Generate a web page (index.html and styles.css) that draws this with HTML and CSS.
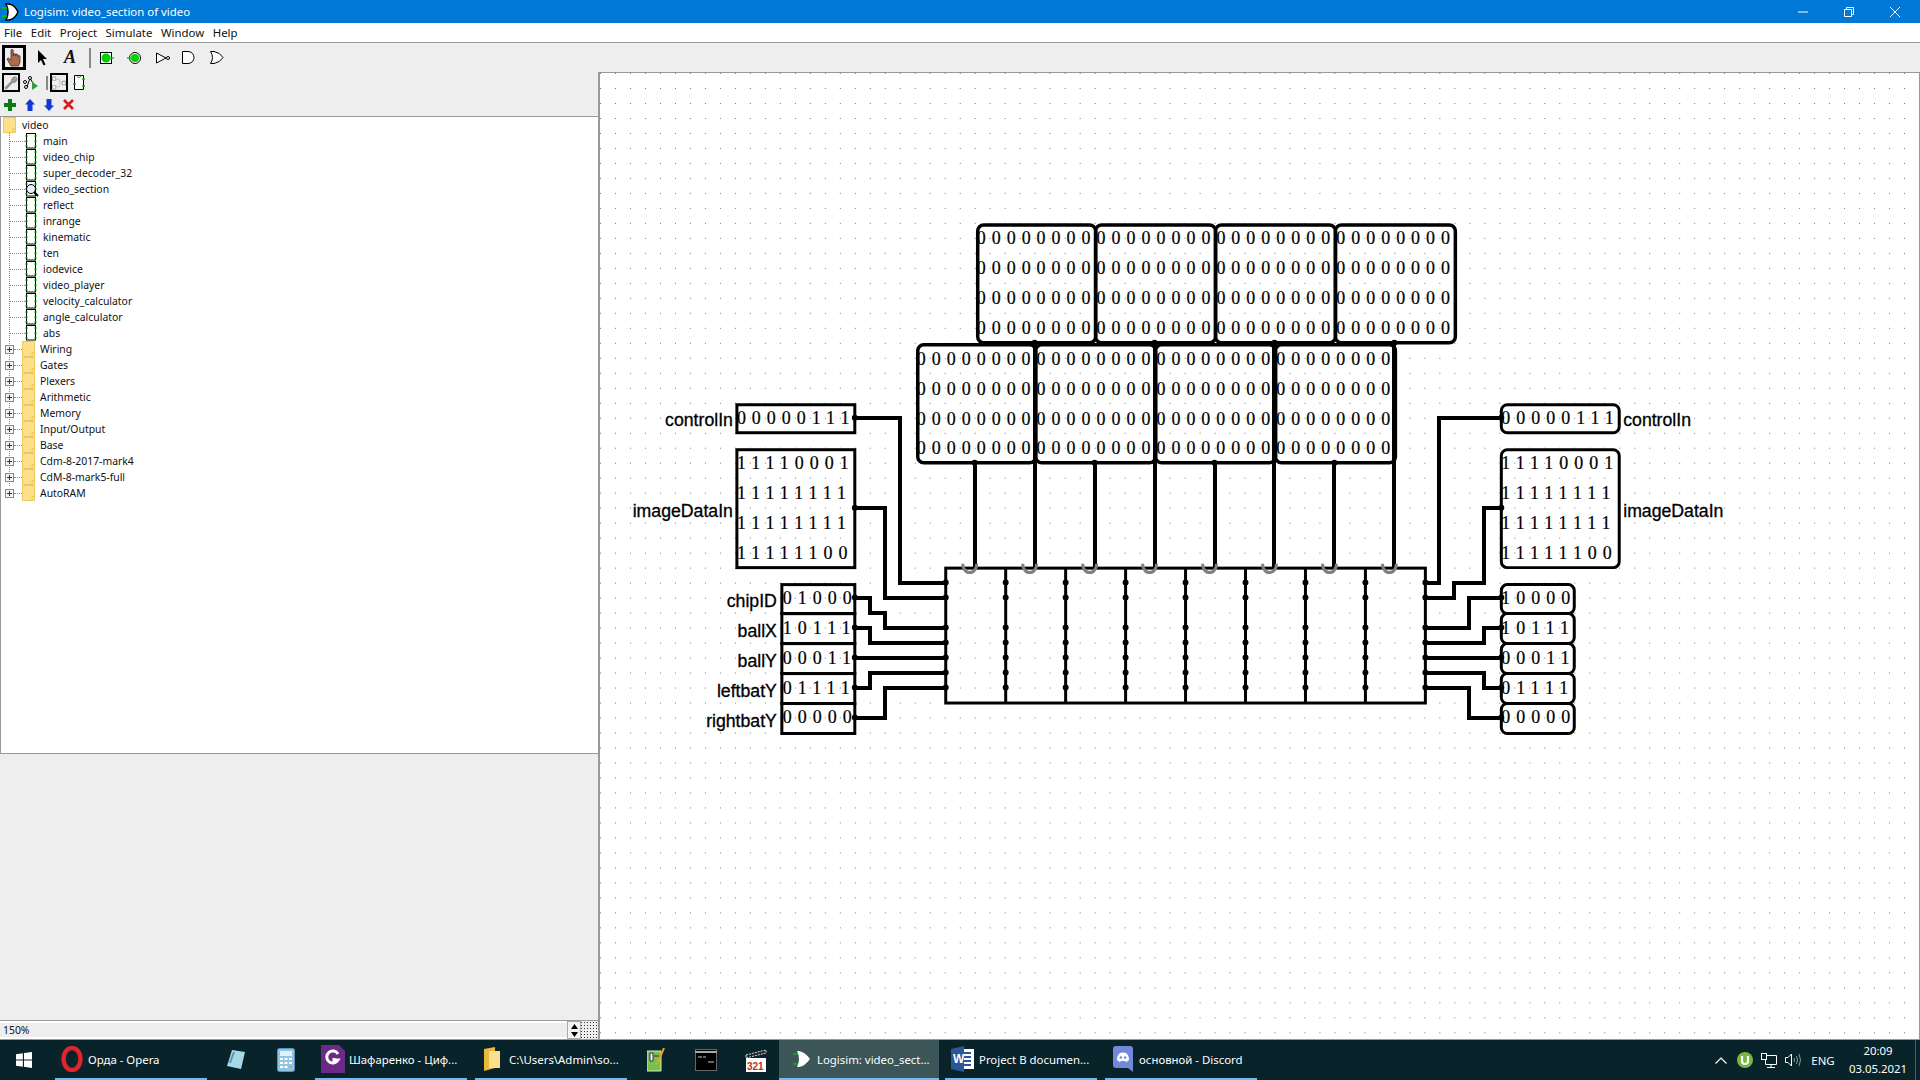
FILE: index.html
```html
<!DOCTYPE html>
<html lang="en">
<head>
  <meta charset="UTF-8">
  <title>Logisim: video_section of video</title>
  <link rel="stylesheet" href="styles.css">
</head>
<body>
  <!-- shared icons -->
  <svg class="defs" width="0" height="0">
    <symbol id="chip" viewBox="0 0 12 16">
      <rect x="1.5" y="0.5" width="9" height="14.5" fill="#fff" stroke="#000"/>
      <path d="M0 3h3M0 8h3M0 13h3M9 3h3M9 8h3M9 13h3" stroke="#00d000" stroke-width="1.2"/>
    </symbol>
    <symbol id="folder" viewBox="0 0 13 16">
      <path d="M.5.5H12.5V15.5H.5z" fill="#fde08a" stroke="#ecc95a"/>
      <path d="M10 15V11.5H12.5" fill="none" stroke="#ecc95a"/>
    </symbol>
    <symbol id="plus" viewBox="0 0 9 9">
      <rect x=".5" y=".5" width="8" height="8" fill="#f4f4f4" stroke="#8a8a8a"/>
      <path d="M2 4.5h5M4.5 2v5" stroke="#333"/>
    </symbol>
  </svg>

  <div class="window">
    <header class="titlebar">
      <svg class="app-icon" width="20" height="20" viewBox="0 0 20 20">
        <path d="M5 2h3q6 1 9 8q-3 7-9 8H5q4-8 0-16z" fill="#fff" stroke="#000" stroke-width="1.5"/>
        <path d="M1 6h5M1 14h5" stroke="#00c000" stroke-width="2"/>
      </svg>
      <span class="title-text">Logisim: video_section of video</span>
      <div class="win-btns">
        <button class="win-btn"><svg width="12" height="12"><path d="M1 6h10" stroke="#fff"/></svg></button>
        <button class="win-btn"><svg width="12" height="12"><path d="M1.5 3.5h7v7h-7zM3.5 3V1.5h7v7H9" fill="none" stroke="#fff"/></svg></button>
        <button class="win-btn"><svg width="12" height="12"><path d="M1 1l10 10M11 1L1 11" stroke="#fff"/></svg></button>
      </div>
    </header>

    <nav class="menubar">
      <span>File</span><span>Edit</span><span>Project</span><span>Simulate</span><span>Window</span><span>Help</span>
    </nav>

    <div class="main">
      <aside class="left">
        <div class="tools">
          <div class="tool-row row-a">
            <span class="frame frame-big">
              <svg width="18" height="18" viewBox="0 0 18 18"><path d="M6 17L2 10l1.5-1 2.5 2V1.5a1 1 0 0 1 2.2 0V7h.3V5.5a1 1 0 0 1 2 0V7h.3V6a1 1 0 0 1 2 0v1.5h.2a1 1 0 0 1 2 0V13l-1.5 4z" fill="#b0694f" stroke="#3d2a22" stroke-width=".8"/></svg>
            </span>
            <svg class="t-arrow" width="10" height="16" viewBox="0 0 10 16"><path d="M1 0v13l3-3 2.5 5.5 2-1L6 9h4z"/></svg>
            <span class="t-a">A</span>
            <span class="sep sep-big"></span>
            <svg class="t-pin" width="14" height="12" viewBox="0 0 14 12"><rect x=".5" y=".5" width="11" height="11" fill="#fff" stroke="#000"/><circle cx="6" cy="6" r="4.5" fill="#00d000"/><path d="M10 6h4" stroke="#00d000" stroke-width="1.5"/></svg>
            <svg class="t-out" width="14" height="12" viewBox="0 0 14 12"><circle cx="8" cy="6" r="5.5" fill="#fff" stroke="#000"/><circle cx="8" cy="6" r="4" fill="#00d000"/><path d="M0 6h4" stroke="#00d000" stroke-width="1.5"/></svg>
            <svg class="t-not" width="14" height="12" viewBox="0 0 14 12"><path d="M.5 1v10L10 6z" fill="#fff" stroke="#000"/><circle cx="12" cy="6" r="1.5" fill="#fff" stroke="#000"/></svg>
            <svg class="t-and" width="14" height="13" viewBox="0 0 14 13"><path d="M.5.5H6a6 6 0 0 1 0 12H.5z" fill="#fff" stroke="#000"/></svg>
            <svg class="t-or" width="14" height="13" viewBox="0 0 14 13"><path d="M.5.5H4q6 1 9 6q-3 5-9 6H.5q4-6 0-12z" fill="#fff" stroke="#000"/></svg>
          </div>
          <div class="tool-row row-b">
            <span class="frame frame-small">
              <svg width="14" height="14" viewBox="0 0 13 13"><path d="M1 11L7 5a3.5 3.5 0 0 1 4-4L9 3l1 1 2-2a3.5 3.5 0 0 1-4 4l-6 6z" fill="#a0a0a0" stroke="#8c8c8c"/></svg>
            </span>
            <svg class="t-sim" width="15" height="15" viewBox="0 0 15 15"><path d="M4 12L7 3l4 7" fill="none" stroke="#000"/><circle cx="7" cy="3" r="1.5" fill="#fff" stroke="#000"/><circle cx="3" cy="12" r="1.5" fill="#fff" stroke="#000"/><circle cx="2" cy="7" r="1.5" fill="#fff" stroke="#000"/><path d="M9 6.5l6 4.5-6 4z" fill="#3a9a3a"/></svg>
            <span class="sep sep-small"></span>
            <span class="frame frame-small">
              <svg width="14" height="14" viewBox="0 0 13 13"><path d="M4 3h3v3h3M4 10h3V7" fill="none" stroke="#b8d8b0"/><path d="M.5 1h3v3h-3zM.5 9h3v3h-3zM9.5 5h3v3h-3z" fill="#fff" stroke="#aaa"/></svg>
            </span>
            <svg class="t-sub" width="12" height="15" viewBox="0 0 12 15"><path d="M1.5.5h9v14h-9z" fill="#fff" stroke="#000"/><path d="M0 9h3M9 4h3M9 11h3" stroke="#00c000" stroke-width="1.4"/><path d="M4 .5a2 2 0 0 0 4 0" fill="none" stroke="#777"/></svg>
          </div>
          <div class="tool-row row-c">
            <svg width="12" height="12" viewBox="0 0 12 12"><path d="M4 0h4v4h4v4H8v4H4V8H0V4h4z" fill="#0a7a14"/></svg>
            <svg width="10" height="12" viewBox="0 0 10 12"><path d="M5 0l5 5.5H7.5V12h-5V5.5H0z" fill="#1438d8"/></svg>
            <svg width="10" height="12" viewBox="0 0 10 12"><path d="M5 12l5-5.5H7.5V0h-5v6.5H0z" fill="#1438d8"/></svg>
            <svg width="11" height="11" viewBox="0 0 11 11"><path d="M1 1l9 9M10 1l-9 9" stroke="#e01818" stroke-width="2.6"/></svg>
          </div>
        </div>

        <div class="tree">
          <div class="root-row"><svg class="ic-folder" width="13" height="16"><use href="#folder"/></svg><span>video</span></div>
          <ul class="tree-list">
            <li class="leaf"><i></i><svg width="12" height="16"><use href="#chip"/></svg><span>main</span></li>
            <li class="leaf"><i></i><svg width="12" height="16"><use href="#chip"/></svg><span>video_chip</span></li>
            <li class="leaf"><i></i><svg width="12" height="16"><use href="#chip"/></svg><span>super_decoder_32</span></li>
            <li class="leaf"><i></i>
              <svg width="14" height="16" viewBox="0 0 14 16"><use href="#chip" width="12" height="16"/><circle cx="6" cy="8" r="4.5" fill="#e8ecfa" stroke="#000"/><path d="M9 11l4 4" stroke="#000" stroke-width="2"/></svg>
              <span class="tight">video_section</span></li>
            <li class="leaf"><i></i><svg width="12" height="16"><use href="#chip"/></svg><span>reflect</span></li>
            <li class="leaf"><i></i><svg width="12" height="16"><use href="#chip"/></svg><span>inrange</span></li>
            <li class="leaf"><i></i><svg width="12" height="16"><use href="#chip"/></svg><span>kinematic</span></li>
            <li class="leaf"><i></i><svg width="12" height="16"><use href="#chip"/></svg><span>ten</span></li>
            <li class="leaf"><i></i><svg width="12" height="16"><use href="#chip"/></svg><span>iodevice</span></li>
            <li class="leaf"><i></i><svg width="12" height="16"><use href="#chip"/></svg><span>video_player</span></li>
            <li class="leaf"><i></i><svg width="12" height="16"><use href="#chip"/></svg><span>velocity_calculator</span></li>
            <li class="leaf"><i></i><svg width="12" height="16"><use href="#chip"/></svg><span>angle_calculator</span></li>
            <li class="leaf"><i></i><svg width="12" height="16"><use href="#chip"/></svg><span>abs</span></li>
            <li class="lib"><svg class="ic-plus" width="9" height="9"><use href="#plus"/></svg><i></i><svg width="13" height="16"><use href="#folder"/></svg><span>Wiring</span></li>
            <li class="lib"><svg class="ic-plus" width="9" height="9"><use href="#plus"/></svg><i></i><svg width="13" height="16"><use href="#folder"/></svg><span>Gates</span></li>
            <li class="lib"><svg class="ic-plus" width="9" height="9"><use href="#plus"/></svg><i></i><svg width="13" height="16"><use href="#folder"/></svg><span>Plexers</span></li>
            <li class="lib"><svg class="ic-plus" width="9" height="9"><use href="#plus"/></svg><i></i><svg width="13" height="16"><use href="#folder"/></svg><span>Arithmetic</span></li>
            <li class="lib"><svg class="ic-plus" width="9" height="9"><use href="#plus"/></svg><i></i><svg width="13" height="16"><use href="#folder"/></svg><span>Memory</span></li>
            <li class="lib"><svg class="ic-plus" width="9" height="9"><use href="#plus"/></svg><i></i><svg width="13" height="16"><use href="#folder"/></svg><span>Input/Output</span></li>
            <li class="lib"><svg class="ic-plus" width="9" height="9"><use href="#plus"/></svg><i></i><svg width="13" height="16"><use href="#folder"/></svg><span>Base</span></li>
            <li class="lib"><svg class="ic-plus" width="9" height="9"><use href="#plus"/></svg><i></i><svg width="13" height="16"><use href="#folder"/></svg><span>Cdm-8-2017-mark4</span></li>
            <li class="lib"><svg class="ic-plus" width="9" height="9"><use href="#plus"/></svg><i></i><svg width="13" height="16"><use href="#folder"/></svg><span>CdM-8-mark5-full</span></li>
            <li class="lib"><svg class="ic-plus" width="9" height="9"><use href="#plus"/></svg><i></i><svg width="13" height="16"><use href="#folder"/></svg><span>AutoRAM</span></li>
          </ul>
        </div>

        <div class="attrs"></div>

        <div class="zoombar">
          <div class="zoom-field">150%</div>
          <div class="spin">
            <span><svg width="7" height="5"><path d="M3.5 0L7 5H0z"/></svg></span>
            <span><svg width="7" height="5"><path d="M3.5 5L7 0H0z"/></svg></span>
          </div>
          <div class="grid-toggle"></div>
        </div>
      </aside>

      <section class="right">
        <div class="gutter"></div>
        <svg class="canvas" viewBox="600 73 1320 966" preserveAspectRatio="xMinYMin meet">
          <defs>
            <pattern id="dots" x="600" y="73" width="15" height="15" patternUnits="userSpaceOnUse">
              <rect width="1" height="1" fill="#777"/>
            </pattern>
          </defs>
          <rect x="600" y="73" width="1320" height="966" fill="url(#dots)"/>

          <!-- ROM blocks -->
          <g class="box box-rom">
            <rect x="978" y="225" width="118" height="118" rx="6"/>
            <rect x="1096" y="225" width="120" height="118" rx="6"/>
            <rect x="1216" y="225" width="120" height="118" rx="6"/>
            <rect x="1336" y="225" width="120" height="118" rx="6"/>
            <rect x="918" y="345" width="118" height="118" rx="6"/>
            <rect x="1036" y="345" width="120" height="118" rx="6"/>
            <rect x="1156" y="345" width="120" height="118" rx="6"/>
            <rect x="1276" y="345" width="120" height="118" rx="6"/>
          </g>
          <g class="bits">
            <text x="977" y="244.5">00000000000000000000000000000000</text>
            <text x="977" y="274.5">00000000000000000000000000000000</text>
            <text x="977" y="304.5">00000000000000000000000000000000</text>
            <text x="977" y="334.5">00000000000000000000000000000000</text>
            <text x="917" y="365">00000000000000000000000000000000</text>
            <text x="917" y="395">00000000000000000000000000000000</text>
            <text x="917" y="425">00000000000000000000000000000000</text>
            <text x="917" y="454.5">00000000000000000000000000000000</text>
          </g>

          <!-- left inputs -->
          <g class="box">
            <rect x="737" y="405" width="118" height="28"/>
            <rect x="737" y="450" width="118" height="118"/>
            <rect x="782" y="585" width="73" height="29"/>
            <rect x="782" y="614" width="73" height="30"/>
            <rect x="782" y="644" width="73" height="30"/>
            <rect x="782" y="674" width="73" height="30"/>
            <rect x="782" y="704" width="73" height="30"/>
          </g>
          <g class="bits">
            <text x="737" y="424.5">00000111</text>
            <text x="737" y="469.5">11110001</text>
            <text x="737" y="499">11111111</text>
            <text x="737" y="529">11111111</text>
            <text x="737" y="559">11111100</text>
            <text x="783" y="604.5">01000</text>
            <text x="783" y="634">10111</text>
            <text x="783" y="664">00011</text>
            <text x="783" y="694">01111</text>
            <text x="783" y="724">00000</text>
          </g>
          <g class="pin-label end">
            <text x="733" y="426">controlIn</text>
            <text x="733" y="517">imageDataIn</text>
            <text x="777" y="607.5">chipID</text>
            <text x="777" y="637.5">ballX</text>
            <text x="777" y="667.5">ballY</text>
            <text x="777" y="697.5">leftbatY</text>
            <text x="777" y="727.5">rightbatY</text>
          </g>

          <!-- right outputs -->
          <g class="box">
            <rect x="1502" y="405" width="118" height="28" rx="6"/>
            <rect x="1502" y="450" width="118" height="118" rx="6"/>
            <rect x="1502" y="585" width="73" height="29" rx="6"/>
            <rect x="1502" y="614" width="73" height="30" rx="6"/>
            <rect x="1502" y="644" width="73" height="30" rx="6"/>
            <rect x="1502" y="674" width="73" height="30" rx="6"/>
            <rect x="1502" y="704" width="73" height="30" rx="6"/>
          </g>
          <g class="bits">
            <text x="1502" y="424.5">00000111</text>
            <text x="1502" y="469.5">11110001</text>
            <text x="1502" y="499">11111111</text>
            <text x="1502" y="529">11111111</text>
            <text x="1502" y="559">11111100</text>
            <text x="1502" y="604.5">10000</text>
            <text x="1502" y="634">10111</text>
            <text x="1502" y="664">00011</text>
            <text x="1502" y="694">01111</text>
            <text x="1502" y="724">00000</text>
          </g>
          <g class="pin-label">
            <text x="1624" y="426">controlIn</text>
            <text x="1624" y="517">imageDataIn</text>
          </g>

          <!-- wires -->
          <g class="wire">
            <path d="M855 418H900V583H946"/>
            <path d="M855 508H885V598H946"/>
            <path d="M855 598H870V613H885V628H946"/>
            <path d="M855 628H870V643H946"/>
            <path d="M855 658H946"/>
            <path d="M855 688H870V673H946"/>
            <path d="M855 718H885V688H946"/>
            <path d="M975 463V568M1035 343V568M1095 463V568M1155 343V568M1215 463V568M1275 343V568M1335 463V568M1395 343V568"/>
            <path d="M1426 583H1440V418H1502"/>
            <path d="M1426 598H1455V583H1485V508H1502"/>
            <path d="M1426 628H1470V598H1502"/>
            <path d="M1426 643H1485V628H1502"/>
            <path d="M1426 658H1502"/>
            <path d="M1426 673H1485V688H1502"/>
            <path d="M1426 688H1470V718H1502"/>
          </g>
          <g class="nubs">
            <path d="M855 418h0M855 508h0M855 598h0M855 628h0M855 658h0M855 688h0M855 718h0M1502 418h0M1502 508h0M1502 598h0M1502 628h0M1502 658h0M1502 688h0M1502 718h0M975 463h0M1095 463h0M1215 463h0M1335 463h0M1035 343h0M1155 343h0M1275 343h0M1395 343h0"/>
          </g>

          <!-- section body -->
          <g class="body-lines">
            <rect x="946" y="568.5" width="480" height="135"/>
            <path d="M1006 568V703M1066 568V703M1126 568V703M1186 568V703M1246 568V703M1306 568V703M1366 568V703"/>
          </g>
          <g class="notch">
            <path d="M963 564a7 9 0 0 0 14 0M1023 564a7 9 0 0 0 14 0M1083 564a7 9 0 0 0 14 0M1143 564a7 9 0 0 0 14 0M1203 564a7 9 0 0 0 14 0M1263 564a7 9 0 0 0 14 0M1323 564a7 9 0 0 0 14 0M1383 564a7 9 0 0 0 14 0"/>
          </g>
          <g class="ports">
            <path d="M946 583h481M946 598h481M946 628h481M946 643h481M946 658h481M946 673h481M946 688h481"/>
          </g>
        </svg>
      </section>
    </div>
  </div>

  <footer class="taskbar">
    <div class="start">
      <svg width="16" height="16" viewBox="0 0 14 14"><path d="M0 2l6-1v5.5H0zM7 .8L14 0v6.5H7zM0 7.5h6V13l-6-1zM7 7.5h7V14l-7-1z" fill="#fff"/></svg>
    </div>
    <div class="task running task-opera">
      <svg width="22" height="26" viewBox="0 0 22 26"><ellipse cx="11" cy="13" rx="8.5" ry="11" fill="none" stroke="#e0242c" stroke-width="4.5"/></svg>
      <span>Орда - Opera</span>
    </div>
    <div class="pin">
      <svg width="20" height="22" viewBox="0 0 20 22"><path d="M6 1l13 2-4 17L1 17z" fill="#a8d8e8"/><path d="M4 14L8 3" stroke="#5a98b0" stroke-width="2"/></svg>
    </div>
    <div class="pin">
      <svg width="18" height="24" viewBox="0 0 18 24"><rect x=".5" y=".5" width="17" height="23" rx="2" fill="#8ec4e4" stroke="#5b90b8"/><rect x="3" y="3" width="12" height="5" fill="#dff0fa"/><path d="M3 11h12M3 15h12M3 19h12" stroke="#fff" stroke-width="2" stroke-dasharray="3 1.5"/><path d="M12 19h3" stroke="#f0a030" stroke-width="2"/></svg>
    </div>
    <div class="task running task-pdf">
      <svg width="24" height="28" viewBox="0 0 24 28"><path d="M0 0h18l6 6v22H0z" fill="#6b2a86"/><path d="M17 9a6 6 0 1 0 0 6h-4v-2" fill="none" stroke="#fff" stroke-width="3"/></svg>
      <span>Шафаренко - Циф...</span>
    </div>
    <div class="task running task-folder">
      <svg width="16" height="24" viewBox="0 0 16 24"><path d="M0 2l11-2v21L0 24z" fill="#e8b93c"/><path d="M5 4h11v17H5z" fill="#fbe08c"/></svg>
      <span>C:\Users\Admin\so...</span>
    </div>
    <div class="pin">
      <svg width="18" height="24" viewBox="0 0 18 24"><path d="M0 3h14v20H0z" fill="#7cc04c" stroke="#d8e8c0"/><path d="M3 5h3v8H3zM7 8h5" stroke="#234" fill="#fff"/><path d="M10 16L17 0" stroke="#e8a020" stroke-width="2"/></svg>
    </div>
    <div class="pin">
      <svg width="22" height="22" viewBox="0 0 22 22"><rect x=".5" y=".5" width="21" height="21" fill="#000" stroke="#666"/><path d="M0 3h22" stroke="#aaa" stroke-width="2"/><path d="M3 8h4M8 8h3M13 13h6" stroke="#ccc"/></svg>
    </div>
    <div class="pin">
      <svg width="22" height="24" viewBox="0 0 22 24"><path d="M1 7l20-5v3L1 10z" fill="#222" stroke="#ddd" stroke-dasharray="2 1"/><rect x="1" y="10" width="20" height="14" fill="#fff"/><text class="clap" x="2" y="22">321</text></svg>
    </div>
    <div class="task active">
      <svg width="20" height="18" viewBox="0 0 20 18"><path d="M5 1h2q6 1 11 8q-5 7-11 8H5q4-8 0-16z" fill="#fff"/><path d="M1 4h5M1 14h5" stroke="#00c000" stroke-width="1.5"/></svg>
      <span>Logisim: video_sect...</span>
    </div>
    <div class="task running task-word">
      <svg width="23" height="26" viewBox="0 0 23 26"><path d="M9 3h14v20H9z" fill="#fff"/><path d="M12 7h8M12 11h8M12 15h8M12 19h8" stroke="#2b579a" stroke-width="2"/><path d="M0 3l13-3v26L0 23z" fill="#2b579a"/><text class="word-w" x="2" y="17">W</text></svg>
      <span>Project B documen...</span>
    </div>
    <div class="task running">
      <svg width="20" height="26" viewBox="0 0 20 26"><path d="M3 0h14a3 3 0 0 1 3 3v23l-5-4H3a3 3 0 0 1-3-3V3a3 3 0 0 1 3-3z" fill="#7289da"/><path d="M4 14q0-5 3-7 3-1 6 0 3 2 3 7-2 2-3 2l-1-1H8l-1 1q-1 0-3-2z" fill="#fff"/><circle cx="7.8" cy="11.5" r="1.3" fill="#7289da"/><circle cx="12.2" cy="11.5" r="1.3" fill="#7289da"/></svg>
      <span>основной - Discord</span>
    </div>

    <div class="tray">
      <div class="tray-ic"><svg width="12" height="7" viewBox="0 0 12 7"><path d="M.5 6.5L6 1l5.5 5.5" fill="none" stroke="#fff" stroke-width="1.2"/></svg></div>
      <div class="tray-ic"><svg width="16" height="16" viewBox="0 0 16 16"><circle cx="8" cy="8" r="8" fill="#76b83f"/><path d="M5 4v5q0 3 3 3t3-3V4" fill="none" stroke="#fff" stroke-width="2.2"/></svg></div>
      <div class="tray-ic"><svg width="16" height="15" viewBox="0 0 16 15"><path d="M4.5 2.5h11v9h-11zM10 11.5V14M6 14.5h8" fill="none" stroke="#fff"/><rect x=".5" y=".5" width="5" height="6" fill="#09232a" stroke="#fff"/></svg></div>
      <div class="tray-ic"><svg width="16" height="14" viewBox="0 0 16 14"><path d="M.5 4.5H3L6.5 1v12L3 9.5H.5z" fill="none" stroke="#fff"/><path d="M9 5q1 2 0 4M11.5 3q2 4 0 8M14 1q3 6 0 12" fill="none" stroke="#8a9a9c"/></svg></div>
      <div class="tray-lang">ENG</div>
      <div class="clock"><span>20:09</span><span>03.05.2021</span></div>
      <div class="show-desktop"></div>
    </div>
  </footer>
</body>
</html>
```

FILE: styles.css
```css
/* Reset */
* {
  box-sizing: border-box;
  margin: 0;
  padding: 0;
}

html, body {
  width: 1920px;
  height: 1080px;
  overflow: hidden;
}

body {
  font-family: "Noto Sans", "Open Sans", sans-serif;
  font-size: 11.4px;
  background: #eee;
  color: #111;
}

.defs {
  display: block;
  height: 0;
}

/* Window frame */
.window {
  display: flex;
  flex-direction: column;
  height: 1040px;
}

.titlebar {
  display: flex;
  align-items: center;
  height: 23px;
  background: #0078d7;
  color: #fff;
}

.app-icon {
  margin-left: 1px;
}

.title-text {
  margin-left: 3px;
}

.win-btns {
  display: flex;
  margin-left: auto;
  margin-right: 2px;
}

.win-btn {
  display: flex;
  align-items: center;
  justify-content: center;
  width: 46px;
  height: 23px;
  border: none;
  background: transparent;
}

.menubar {
  display: flex;
  align-items: center;
  gap: 8.6px;
  height: 20px;
  padding-left: 4px;
  background: #fff;
  border-bottom: 1px solid #999;
}

/* Main split */
.main {
  display: flex;
  flex: 1;
  min-height: 0;
}

.left {
  display: flex;
  flex-direction: column;
  width: 598px;
}

.right {
  display: flex;
  flex-direction: column;
  flex: 1;
  min-width: 0;
}

.gutter {
  height: 29px;
  background: #eee;
}

.canvas {
  display: block;
  flex: 1;
  width: 100%;
  min-height: 0;
  background: #fff;
  border-top: 1px solid #999;
  border-left: 2px solid #999;
  border-right: 1px solid #999;
  border-bottom: 1px solid #999;
}

/* Toolbars */
.tools {
  height: 74px;
  background: #eee;
  border-bottom: 1px solid #999;
}

.tool-row {
  display: flex;
  align-items: center;
}

.row-a {
  height: 29px;
  padding-left: 2px;
}

.row-b {
  height: 21px;
  padding-left: 2px;
}

.row-c {
  height: 23px;
  padding-left: 4px;
  gap: 8px;
}

.row-c svg + svg {
  margin-left: 1px;
}

.frame {
  display: flex;
  align-items: center;
  justify-content: center;
}

.frame-big {
  width: 24px;
  height: 25px;
  border: 3px solid #000;
}

.frame-small {
  width: 18px;
  height: 19px;
  border: 2px solid #000;
}

.sep {
  display: block;
  width: 2px;
  background: #888;
}

.sep-big {
  height: 20px;
  margin-left: 9px;
}

.sep-small {
  height: 14px;
  margin-left: 8px;
  margin-right: 2px;
}

.t-arrow {
  margin-left: 11px;
}

.t-a {
  width: 16px;
  margin-left: 17px;
  font: italic bold 18px "Liberation Serif", serif;
}

.t-pin {
  margin-left: 9px;
}

.t-out {
  margin-left: 13px;
}

.t-not {
  margin-left: 15px;
}

.t-and {
  margin-left: 12px;
}

.t-or {
  margin-left: 14px;
}

.t-sim {
  margin-left: 3px;
}

.t-sub {
  margin-left: 5px;
}

/* Project tree */
.tree {
  height: 637px;
  background: #fff;
  border-left: 1px solid #999;
  border-bottom: 1px solid #999;
  font-size: 10.4px;
}

.root-row {
  display: flex;
  align-items: center;
  height: 16px;
  padding-left: 2px;
}

.root-row span {
  margin-left: 6px;
}

.tree-list {
  list-style: none;
}

.leaf, .lib {
  display: flex;
  align-items: center;
  height: 16px;
  background-image: linear-gradient(#888 50%, transparent 50%);
  background-size: 1px 2px;
  background-repeat: repeat-y;
  background-position: 8px 0;
}

.leaf i {
  display: block;
  width: 15px;
  margin-left: 9px;
  border-bottom: 1px dotted #888;
}

.leaf svg {
  flex: none;
}

.leaf span {
  margin-left: 6px;
}

.leaf span.tight {
  margin-left: 4px;
}

.ic-plus {
  flex: none;
  margin-left: 4px;
}

.lib i {
  display: block;
  width: 8px;
  border-bottom: 1px dotted #888;
}

.lib span {
  margin-left: 5px;
}

.lib:last-child {
  background-repeat: no-repeat;
}

.attrs {
  flex: 1;
  background: #eee;
}

/* Zoom control */
.zoombar {
  display: flex;
  align-items: center;
  height: 20px;
  background: #eee;
  border-top: 1px solid #999;
  border-bottom: 1px solid #999;
  font-size: 10.4px;
}

.zoom-field {
  flex: 1;
  height: 18px;
  padding: 1px 0 0 3px;
  border-top: 2px solid #fff;
  border-bottom: 2px solid #fff;
  line-height: 13px;
}

.spin {
  display: flex;
  flex-direction: column;
  width: 14px;
  height: 18px;
  border: 1px solid #aaa;
  background: #f2f2f2;
}

.spin span {
  display: flex;
  align-items: center;
  justify-content: center;
  flex: 1;
}

.grid-toggle {
  width: 17px;
  height: 18px;
  background-image: radial-gradient(#333 40%, transparent 45%);
  background-size: 3px 3px;
  background-position: 2px 3px;
}

/* Circuit drawing */
.box rect {
  fill: none;
  stroke: #000;
  stroke-width: 3;
}

.box-rom rect {
  stroke-width: 3.5;
}

.bits {
  font-family: "Liberation Serif", serif;
  font-size: 18px;
  letter-spacing: 6px;
  fill: #000;
  stroke: #000;
  stroke-width: .2;
}

.pin-label {
  font-family: "Liberation Sans", sans-serif;
  font-size: 17.7px;
  fill: #000;
  stroke: #000;
  stroke-width: .3;
}

.pin-label.end {
  text-anchor: end;
}

.wire path {
  fill: none;
  stroke: #000;
  stroke-width: 4;
  shape-rendering: crispEdges;
}

.nubs path {
  fill: none;
  stroke: #000;
  stroke-width: 6;
  stroke-linecap: round;
}

.notch path {
  fill: none;
  stroke: #808080;
  stroke-width: 3;
}

.body-lines rect, .body-lines path {
  fill: none;
  stroke: #000;
  stroke-width: 3;
}

.ports path {
  fill: none;
  stroke: #000;
  stroke-width: 6;
  stroke-linecap: round;
  stroke-dasharray: 0 60;
}

/* Taskbar */
.taskbar {
  display: flex;
  align-items: center;
  height: 40px;
  background: #09232a;
  color: #fff;
}

.start {
  display: flex;
  align-items: center;
  width: 51px;
  height: 40px;
  padding-left: 16px;
}

.task {
  display: flex;
  align-items: center;
  gap: 6px;
  width: 152px;
  height: 40px;
  margin: 0 4px;
  padding-left: 8px;
  white-space: nowrap;
  overflow: hidden;
}

.task-opera {
  gap: 5px;
  padding-left: 6px;
}

.task-pdf {
  gap: 4px;
  padding-left: 6px;
}

.task-folder {
  gap: 9px;
  padding-left: 9px;
}

.task-word {
  gap: 5px;
  padding-left: 6px;
}

.running {
  border-bottom: 2px solid #76b9ed;
}

.active {
  gap: 5px;
  width: 160px;
  margin: 0 2px 0 -2px;
  padding-left: 13px;
  background: #3c5558;
  border-bottom: 2px solid #76b9ed;
}

.pin {
  display: flex;
  align-items: center;
  justify-content: center;
  width: 50px;
  height: 40px;
}

.clap {
  font: bold 10px "Liberation Sans", sans-serif;
  fill: #c03020;
}

.word-w {
  font: bold 12px "Liberation Sans", sans-serif;
  fill: #fff;
}

.tray {
  display: flex;
  align-items: center;
  margin-left: auto;
}

.tray-ic {
  display: flex;
  align-items: center;
  justify-content: center;
  width: 24px;
}

.tray-lang {
  width: 36px;
  text-align: center;
}

.clock {
  display: flex;
  flex-direction: column;
  align-items: center;
  width: 74px;
  line-height: 18px;
}

.show-desktop {
  width: 5px;
  height: 40px;
  border-left: 1px solid #4a5f63;
}
```
